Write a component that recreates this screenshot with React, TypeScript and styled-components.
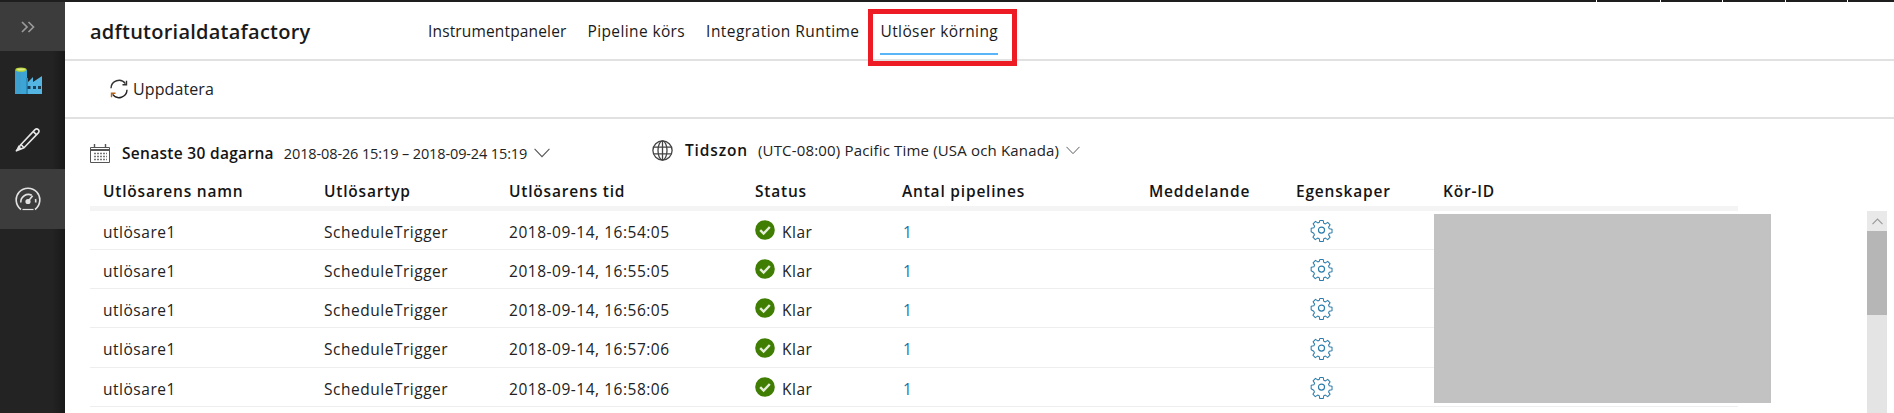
import React from "react";
import styled, { createGlobalStyle } from "styled-components";

const Global = createGlobalStyle`
  html, body { margin: 0; padding: 0; background: #fff; overflow: hidden; }
  * { box-sizing: border-box; }
  body { font-family: "Open Sans", "Noto Sans", "Liberation Sans", sans-serif; color: #141414; }
`;

const Page = styled.div`
  width: 1894px; height: 413px; overflow: hidden;
  display: flex; flex-direction: column;
`;
const TopStrip = styled.div`
  height: 2px; flex: none; background: #1e1e1e;
  display: flex; justify-content: flex-end;
`;
const StripTick = styled.span<{ $w: number }>`
  width: ${p => p.$w}px; border-left: 1px solid #fff;
`;
const Body = styled.div`flex: 1; display: flex; min-height: 0;`;

const Sidebar = styled.nav`
  width: 65px; flex: none; display: flex; flex-direction: column;
  background: linear-gradient(90deg, #232323 0 52px, #191919 65px);
`;
const SideItem = styled.div<{ $h: number; $light?: boolean }>`
  height: ${p => p.$h}px; display: flex; align-items: center; justify-content: center;
  padding-right: 9px;
  background: ${p => (p.$light ? "#3c3c3c" : "transparent")};
`;
const Main = styled.main`flex: 1; min-width: 0; display: flex; flex-direction: column;`;

const Header = styled.header`
  height: 59px; flex: none; border-bottom: 2px solid #e1e1e1;
  display: flex; align-items: stretch; padding-left: 25px;
`;
const Title = styled.h1`
  margin: 0; width: 338px; font-size: 20px; font-weight: 600; letter-spacing: 0.24px;
  line-height: 60px; color: #1a1a1a;
`;
const Tabs = styled.div`display: flex; gap: 21px;`;
const Tab = styled.div<{ $active?: boolean; $ls: number }>`
  position: relative; font-size: 15.5px; letter-spacing: ${p => p.$ls}px; line-height: 58px; height: 53px;
  white-space: nowrap; color: #1a1a1a;
  border-bottom: 2px solid ${p => (p.$active ? "#5ab4f8" : "transparent")};
`;
const Highlight = styled.span`
  position: absolute; left: -12px; right: -19px; top: 7px; height: 57px;
  border: 5px solid #ed1c24; pointer-events: none;
`;

const Toolbar = styled.div`
  height: 58px; flex: none; border-bottom: 2px solid #e1e1e1;
  display: flex; align-items: center; gap: 4px; padding: 0 0 0 44px;
`;
const ToolLabel = styled.span`font-size: 16px; letter-spacing: 0.1px; color: #222;`;

const Filters = styled.div`
  height: 55px; flex: none; display: flex; padding-left: 25px; align-items: flex-start;
`;
const FilterGroup = styled.div<{ $w?: number; $top: number }>`
  display: flex; align-items: center; margin-top: ${p => p.$top}px;
  width: ${p => (p.$w ? `${p.$w}px` : "auto")}; flex: none;
`;
const FilterName = styled.span<{ $ml: number; $mr: number; $ls: number }>`
  margin-left: ${p => p.$ml}px; margin-right: ${p => p.$mr}px;
  font-size: 15.5px; font-weight: 600; white-space: nowrap; letter-spacing: ${p => p.$ls}px;
`;
const FilterValue = styled.span<{ $size: number; $ls: number }>`
  font-size: ${p => p.$size}px; letter-spacing: ${p => p.$ls}px; white-space: nowrap; color: #222; margin-right: 7px;
`;

const columns = "221px 185px 246px 147px 247px 147px 147px 308px";
const TableHead = styled.div`
  width: 1648px; margin-left: 25px; flex: none; height: 37px; padding-top: 7px;
  display: grid; grid-template-columns: ${columns};
  align-items: start; border-bottom: 5px solid #f4f4f4;
`;
const HeadCell = styled.div`
  font-size: 15.5px; font-weight: 600; white-space: nowrap; line-height: 20px; padding-left: 13px;
  letter-spacing: 0.8px;
`;
const RowsArea = styled.div`
  position: relative; flex: 1; min-height: 0; display: flex; padding-left: 25px;
`;
const Rows = styled.div`width: 1648px; flex: none;`;
const Row = styled.div`
  height: 39px; border-bottom: 1.5px solid #eee;
  display: grid; grid-template-columns: ${columns};
  align-items: center;
  &:nth-child(4) { height: 40px; }
`;
const Cell = styled.div`
  font-size: 15.5px; letter-spacing: 0.52px; white-space: nowrap; padding-left: 13px; color: #222;
  display: flex; align-items: center; line-height: 20px;
`;
const TextCell = styled(Cell)`padding-top: 3px;`;
const StatusText = styled.span`margin-left: 7px; padding-top: 3px;`;
const RunLink = styled.a`color: #236f9f; padding-left: 1px; padding-top: 3px;`;
const GearWrap = styled.span`display: flex; padding-left: 14px; padding-top: 1px;`;
const Redaction = styled.div`
  position: absolute; left: 1369px; top: 3px; width: 337px; height: 189px; background: #c2c2c2;
`;
const Scrollbar = styled.div`
  width: 20px; flex: none; margin-left: 129px; background: #e4e4e4;
  display: flex; flex-direction: column;
`;
const ScrollUp = styled.div`
  height: 20px; display: flex; align-items: center; justify-content: center; background: #e9e9e9;
`;
const ScrollThumb = styled.div`height: 84px; background: #b6b6b6;`;

const Chevrons = () => (
  <svg width="14" height="12" viewBox="0 0 14 12" fill="none" stroke="#9a9a9a" strokeWidth="1.7">
    <path d="M1 1l5 5-5 5M7.5 1l5 5-5 5" />
  </svg>
);
const Factory = () => (
  <svg width="27" height="27" viewBox="0 0 27 27">
    <path d="M0 3h12v24H0z" fill="#3aa2d3" />
    <path d="M0 3h6v24H0z" fill="#3b99c7" />
    <path d="M0 10l0 17h12V3H0z" fill="#41a9da" opacity=".4" />
    <ellipse cx="6" cy="2.6" rx="5.7" ry="2.2" fill="#b6d432" />
    <ellipse cx="6" cy="2.6" rx="3.8" ry="1" fill="#dbe98a" />
    <path d="M12 27V16l6-6v5l9-6v18z" fill="#55b5e2" />
    <path d="M11 11h2v16h-2z" fill="#2e8cbc" />
    <path d="M12.5 19h3v3h-3zM18 19h3v3h-3zM23 19h3v3h-3z" fill="#1d3f55" />
  </svg>
);
const Pencil = () => (
  <svg width="26" height="25" viewBox="0 0 26 25" fill="none" stroke="#e6e6e6" strokeWidth="1.6" strokeLinejoin="round">
    <path d="M6 17.5L20 2.6c1-.9 2.4-.9 3.3 0 .9 1 .8 2.4 0 3.3L9 20.8l-7.6 3z" />
    <path d="M6 17.5l3 3.3M18.2 4.6l3.3 3.1" />
    <path d="M1.4 23.8l2-5.5 3.6 3.6z" fill="#e6e6e6" stroke="none" />
  </svg>
);
const Gauge = () => (
  <svg width="26" height="25" viewBox="0 0 26 25" fill="none" stroke="#e2e2e2" strokeWidth="1.6">
    <path d="M6 22.5A11.8 11.8 0 1 1 20 22.5" />
    <path d="M7.5 22.5h11" strokeWidth="1.2" />
    <path d="M5.8 15.5a7.6 7.6 0 0 1 11-7.2" />
    <path d="M20.5 12a7.6 7.6 0 0 1 .1 3.5" />
    <circle cx="13" cy="14.5" r="1.8" fill="#e2e2e2" />
    <path d="M13.6 13.7l4-5" />
  </svg>
);
const Refresh = () => (
  <svg width="20" height="20" viewBox="0 0 20 20" fill="none" strokeWidth="1.4">
    <path d="M2 9.2A8 8 0 0 1 16.4 4.6" stroke="#333" />
    <path d="M17.5 1.8v4h-4" stroke="#333" />
    <path d="M18 10.8A8 8 0 0 1 3.6 15.4" stroke="#222" />
    <path d="M2.5 18.2v-4h4" stroke="#b8651b" />
  </svg>
);
const Calendar = () => (
  <svg width="20" height="19" viewBox="0 0 20 19" fill="none" stroke="#555">
    <path d="M.5 3.5h19v15H.5z" />
    <path d="M.5 6h19" strokeWidth="2" />
    <path d="M4.5 0v4M15.5 0v4" strokeWidth="1.4" />
    <path d="M4 9.5h13M4 12.5h13M4 15.5h13" stroke="#777" strokeWidth="1.6" strokeDasharray="2 1" />
  </svg>
);
const Chevron = ({ w }: { w: number }) => (
  <svg width={w} height={w * 0.62} viewBox="0 0 16 10" fill="none" stroke="#555" strokeWidth="1.1">
    <path d="M.5 1L8 8.8 15.5 1" />
  </svg>
);
const Globe = () => (
  <svg width="21" height="21" viewBox="0 0 21 21" fill="none" stroke="#444" strokeWidth="1.3">
    <circle cx="10.5" cy="10.5" r="9.6" />
    <ellipse cx="10.5" cy="10.5" rx="4.5" ry="9.6" />
    <path d="M10.5 1v19M1.5 7.2h18M1.5 13.8h18" />
  </svg>
);
const Check = () => (
  <svg width="20" height="20" viewBox="0 0 20 20">
    <circle cx="10" cy="10" r="9.8" fill="#3f7d03" />
    <path d="M5.2 10.2l3.4 3.4 6.2-6.6" fill="none" stroke="#e6efd9" strokeWidth="2.4" />
  </svg>
);
const Gear = () => (
  <svg width="23" height="23" viewBox="0 0 24 24" fill="none" stroke="#2b7cab" strokeWidth="1.2" strokeLinejoin="round">
    <path d="M10 1.5h4l.6 3.2 1.9.8 2.7-1.8 2.8 2.8-1.8 2.7.8 1.9 3.2.6v4l-3.2.6-.8 1.9 1.8 2.7-2.8 2.8-2.7-1.8-1.9.8-.6 3.2h-4l-.6-3.2-1.9-.8-2.7 1.8-2.8-2.8 1.8-2.7-.8-1.9L0 14.5v-4l3.2-.6.8-1.9-1.8-2.7L5 2.5l2.7 1.8 1.9-.8z" transform="translate(1.2 0.2) scale(.9)" />
    <circle cx="12" cy="11.6" r="3.2" />
  </svg>
);
const CaretUp = () => (
  <svg width="11" height="7" viewBox="0 0 11 7" fill="none" stroke="#999" strokeWidth="1.1">
    <path d="M.5 6.2L5.5 1l5 5.2" />
  </svg>
);

const heads = ["Utlösarens namn", "Utlösartyp", "Utlösarens tid", "Status", "Antal pipelines", "Meddelande", "Egenskaper", "Kör-ID"];
const times = ["16:54:05", "16:55:05", "16:56:05", "16:57:06", "16:58:06"];
const ticks = [64, 62, 63, 62, 47];

export default function App() {
  return (
    <Page>
      <Global />
      <TopStrip>
        {ticks.map((w, i) => <StripTick key={i} $w={w} />)}
      </TopStrip>
      <Body>
        <Sidebar>
          <SideItem $h={49} $light><Chevrons /></SideItem>
          <SideItem $h={59}><Factory /></SideItem>
          <SideItem $h={59}><Pencil /></SideItem>
          <SideItem $h={60} $light><Gauge /></SideItem>
        </Sidebar>
        <Main>
          <Header>
            <Title>adftutorialdatafactory</Title>
            <Tabs>
              <Tab $ls={0.15}>Instrumentpaneler</Tab>
              <Tab $ls={0.38}>Pipeline körs</Tab>
              <Tab $ls={0.45}>Integration Runtime</Tab>
              <Tab $ls={0.4} $active>Utlöser körning<Highlight /></Tab>
            </Tabs>
          </Header>
          <Toolbar>
            <Refresh />
            <ToolLabel>Uppdatera</ToolLabel>
          </Toolbar>
          <Filters>
            <FilterGroup $w={562} $top={23}>
              <Calendar />
              <FilterName $ml={12} $mr={10} $ls={0.3}>Senaste 30 dagarna</FilterName>
              <FilterValue $size={14.5} $ls={-0.12}>2018-08-26 15:19 – 2018-09-24 15:19</FilterValue>
              <Chevron w={16} />
            </FilterGroup>
            <FilterGroup $top={20}>
              <Globe />
              <FilterName $ml={12} $mr={10} $ls={0.85}>Tidszon</FilterName>
              <FilterValue $size={15} $ls={0.17}>(UTC-08:00) Pacific Time (USA och Kanada)</FilterValue>
              <Chevron w={14} />
            </FilterGroup>
          </Filters>
          <TableHead>
            {heads.map(h => <HeadCell key={h}>{h}</HeadCell>)}
          </TableHead>
          <RowsArea>
            <Rows>
              {times.map(t => (
                <Row key={t}>
                  <TextCell>utlösare1</TextCell>
                  <TextCell>ScheduleTrigger</TextCell>
                  <TextCell>2018-09-14, {t}</TextCell>
                  <Cell><Check /><StatusText>Klar</StatusText></Cell>
                  <Cell><RunLink>1</RunLink></Cell>
                  <Cell />
                  <Cell><GearWrap><Gear /></GearWrap></Cell>
                  <Cell />
                </Row>
              ))}
            </Rows>
            <Redaction />
            <Scrollbar>
              <ScrollUp><CaretUp /></ScrollUp>
              <ScrollThumb />
            </Scrollbar>
          </RowsArea>
        </Main>
      </Body>
    </Page>
  );
}
